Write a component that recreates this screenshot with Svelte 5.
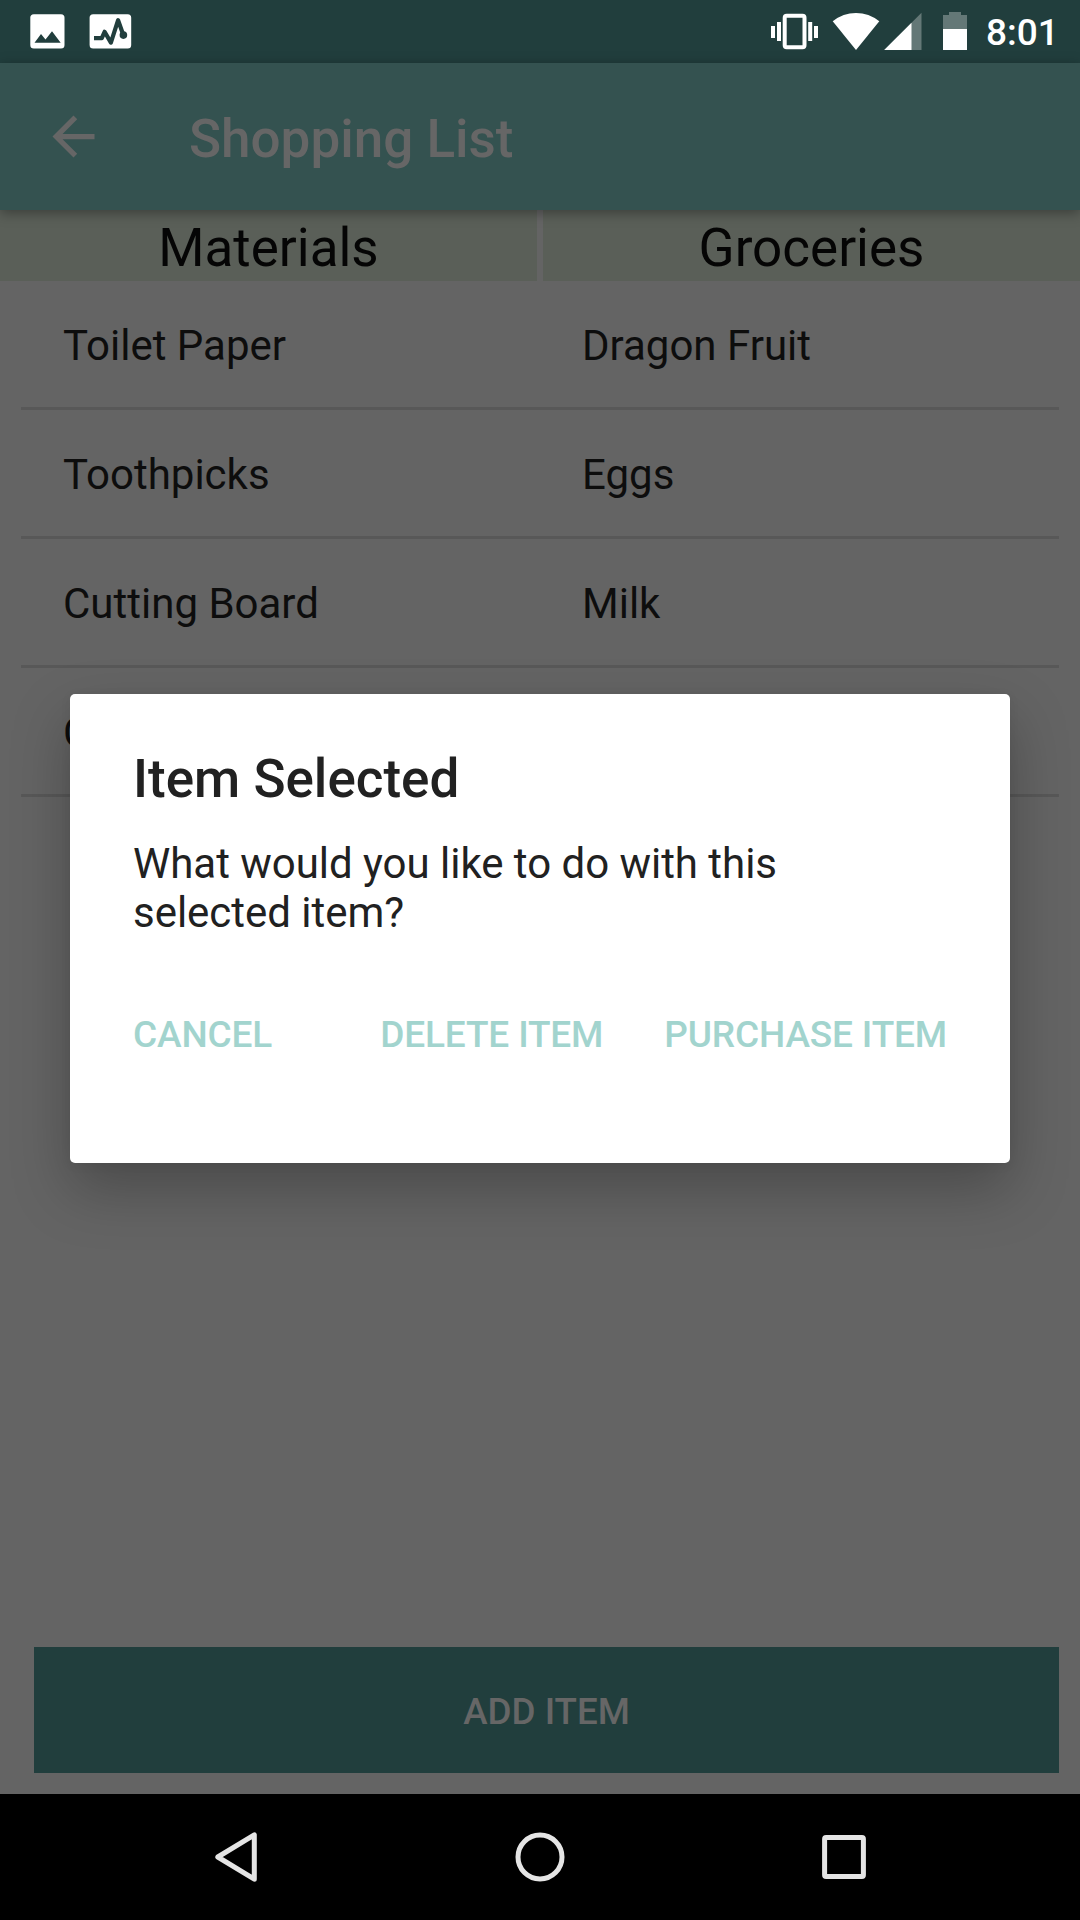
<script lang="ts">
  const tabs = ['Materials', 'Groceries'];
  const rows = [
    ['Toilet Paper', 'Dragon Fruit'],
    ['Toothpicks', 'Eggs'],
    ['Cutting Board', 'Milk'],
    ['C', ''],
  ];
</script>

<div class="screen">
  <header class="status">
    <svg class="picture" width="35" height="63" viewBox="30 0 35 63">
      <rect x="30.3" y="14.2" width="34.2" height="34.4" rx="3.5" fill="#fff" />
      <path d="M34.5 42.7 41 34l4.5 5.5 6.5-8.2 8.7 11.4z" fill="#213e3d" />
    </svg>
    <svg class="pulse" width="43" height="63" viewBox="89 0 43 63">
      <rect x="89.6" y="14.2" width="41.6" height="34.4" rx="3.5" fill="#fff" />
      <path d="M94 38.2h7.8l2.8-6.4 6.3 10.8 7.2-22.4 5.3 15" fill="none" stroke="#213e3d" stroke-width="4.2" stroke-linejoin="round" />
      <circle cx="123.4" cy="35.1" r="3.8" fill="#213e3d" />
    </svg>
    <svg class="vibrate" width="49" height="63" viewBox="770 0 49 63" fill="#fff">
      <path d="M771 26h4v12h-4zM777 22h4v19h-4zM808.2 22h4v19h-4zM814 26h4v12h-4z" />
      <rect x="784.7" y="15.7" width="19.8" height="31.6" rx="2" fill="none" stroke="#fff" stroke-width="4" />
    </svg>
    <svg class="wifi" width="48" height="63" viewBox="832 0 48 63" fill="#fff">
      <path d="M856 50 832.7 21.3Q843 13 856 13t23.3 8.3z" />
    </svg>
    <svg class="signal" width="38" height="63" viewBox="883.5 0 38 63">
      <path d="M883.7 50 921 12.7V50z" fill="#647877" />
      <path d="M883.7 50 911 22.7V50z" fill="#fff" />
    </svg>
    <svg class="battery" width="24" height="63" viewBox="943 0 24 63">
      <path d="M943 15h6v-3h12v3h6v14h-24z" fill="#647877" />
      <path d="M943 29h24v21h-24z" fill="#fff" />
    </svg>
    <span class="clock">8:01</span>
  </header>

  <div class="appbar">
    <svg width="63" height="63" viewBox="0 0 24 24" fill="#666">
      <path d="M20 11H7.83l5.59-5.59L12 4l-8 8 8 8 1.41-1.41L7.83 13H20v-2z" />
    </svg>
    <h1>Shopping List</h1>
  </div>

  <div class="tabs">
    {#each tabs as tab}
      <div class="tab">{tab}</div>
    {/each}
  </div>

  <main>
    {#each rows as row}
      <div class="row">
        {#each row as cell}
          <span>{cell}</span>
        {/each}
      </div>
    {/each}
  </main>

  <button class="add">ADD ITEM</button>

  <nav>
    <svg width="50" height="60" viewBox="210 1827 50 60">
      <path d="M254.3 1834.8v44.4L217.8 1857z" fill="none" stroke="#e5e5e5" stroke-width="5" stroke-linejoin="round" />
    </svg>
    <svg width="60" height="60" viewBox="510 1827 60 60">
      <circle cx="540" cy="1857" r="22" fill="none" stroke="#e5e5e5" stroke-width="5" />
    </svg>
    <svg width="60" height="60" viewBox="814 1827 60 60">
      <rect x="824.6" y="1837.6" width="38.8" height="38.8" rx="1.5" fill="none" stroke="#e5e5e5" stroke-width="5" />
    </svg>
  </nav>

  <div class="dialog" role="dialog" aria-labelledby="dialog-title">
    <h2 id="dialog-title">Item Selected</h2>
    <p>What would you like to do with this selected item?</p>
    <div class="actions">
      <button>CANCEL</button>
      <button class="delete">DELETE ITEM</button>
      <button>PURCHASE ITEM</button>
    </div>
  </div>
</div>

<style>
  :global(body) {
    margin: 0;
    background: #646464;
  }
  .screen {
    position: relative;
    display: flex;
    flex-direction: column;
    width: 1080px;
    height: 1920px;
    overflow: hidden;
    background: #646464;
    font-family: Roboto, sans-serif;
  }
  svg {
    display: block;
    flex: none;
  }
  button {
    padding: 0;
    border: 0;
    background: none;
    font: 500 36.75px/44px Roboto, sans-serif;
    white-space: nowrap;
  }
  h1,
  h2,
  p {
    margin: 0;
  }

  .status {
    display: flex;
    flex: none;
    height: 63px;
    padding-left: 30px;
    background: #213e3d;
  }
  .pulse {
    margin-left: 24px;
  }
  .vibrate {
    margin-left: 638px;
  }
  .wifi {
    margin-left: 13px;
  }
  .signal {
    margin-left: 3.5px;
  }
  .battery {
    margin-left: 21.5px;
  }
  .clock {
    margin-left: 19px;
    padding-top: 1px;
    color: #fff;
    font-size: 37px;
    font-weight: 500;
    line-height: 63px;
  }

  .appbar {
    display: flex;
    flex: none;
    align-items: center;
    gap: 84px;
    height: 147px;
    padding-left: 42px;
    background: #345250;
    box-shadow: 0 3px 12px rgba(0, 0, 0, 0.35);
    z-index: 1;
  }
  h1 {
    padding-top: 5px;
    color: #666;
    font-size: 53px;
    font-weight: 500;
    line-height: 62px;
  }

  .tabs {
    display: grid;
    flex: none;
    grid-template-columns: 1fr 1fr;
    gap: 6px;
    height: 71px;
  }
  .tab {
    padding-top: 3px;
    background: #5a5f58;
    color: #050505;
    font-size: 53px;
    line-height: 70px;
    height: 68px;
    text-align: center;
  }

  main {
    display: flex;
    flex: 1;
    flex-direction: column;
    padding: 0 21px;
  }
  .row {
    display: grid;
    grid-template-columns: 1fr 1fr;
    height: 126px;
    border-bottom: 3px solid #585858;
    color: #0d0d0d;
    font-size: 42px;
    line-height: 129px;
  }
  .row span {
    padding-left: 42px;
  }

  .add {
    flex: none;
    height: 126px;
    margin: 0 21px 21px 34px;
    padding-top: 3px;
    background: #213e3d;
    color: #666;
  }

  nav {
    display: flex;
    flex: none;
    align-items: center;
    gap: 250px;
    height: 126px;
    padding-left: 210px;
    box-sizing: border-box;
    background: #000;
  }
  nav svg:last-child {
    margin-left: -6px;
  }

  .dialog {
    position: absolute;
    top: 694px;
    left: 70px;
    z-index: 2;
    box-sizing: border-box;
    width: 940px;
    height: 469px;
    padding: 54px 63px 0;
    border-radius: 5px;
    background: #fff;
    box-shadow: 0 26px 58px rgba(0, 0, 0, 0.26), 0 2px 12px rgba(0, 0, 0, 0.06);
    color: #212121;
  }
  h2 {
    font-size: 53px;
    font-weight: 500;
    line-height: 62px;
  }
  p {
    max-width: 700px;
    margin-top: 29px;
    font-size: 42px;
    line-height: 49px;
    letter-spacing: -0.03px;
  }
  .actions {
    display: flex;
    margin-top: 76px;
  }
  .actions button {
    color: #a2d4ce;
    font-size: 37px;
    letter-spacing: -0.15px;
  }
  .actions .delete {
    margin: 0 61px 0 auto;
  }
</style>
